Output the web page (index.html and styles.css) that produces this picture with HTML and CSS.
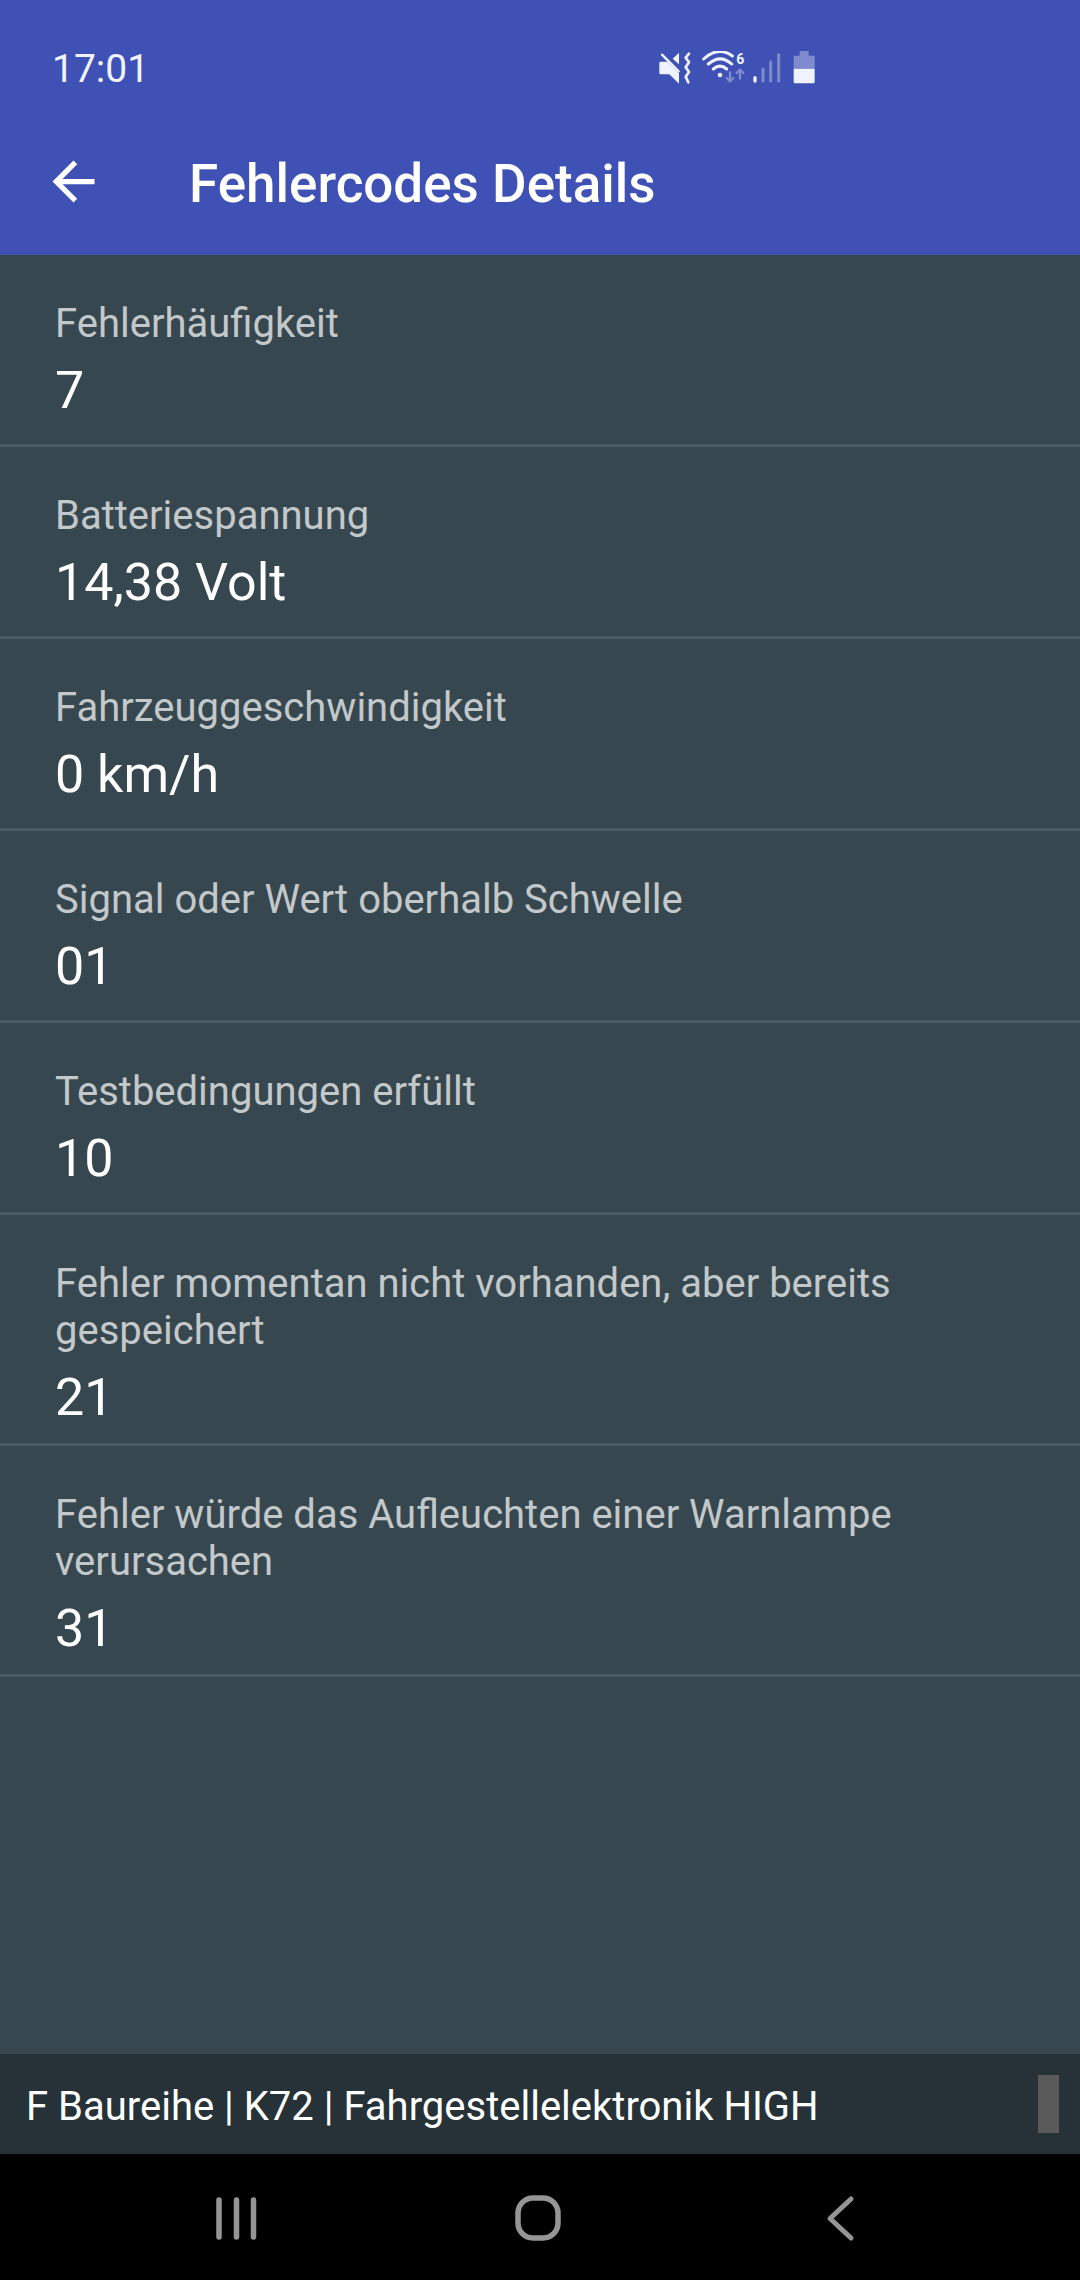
FILE: index.html
```html
<!doctype html>
<html lang="de">
    <head>
        <meta charset="utf-8">
        <meta name="viewport" content="width=device-width, initial-scale=1.0">
        <title>Fehlercodes Details</title>
        <link rel="stylesheet" href="styles.css">
    </head>
    <body>
        <div id="statusbar">
            <div class="clock">17:01</div>
            <div class="status-icons">
                <!-- muted / vibrate -->
                <svg width="34" height="34" viewBox="54 46 102 102">
                    <path class="fill" d="M62 78h20l35 35v31l-29-28H62q-4 0-4-4V82q0-4 4-4z"/>
                    <path class="fill" d="M98 69l19-18v35z"/>
                    <path class="line" stroke-width="7" d="M66 57l50 50"/>
                    <path class="line" stroke-width="8" d="M147 54l-10 12 10 14-10 15 10 14-10 14 8 17"/>
                </svg>
                <!-- wifi -->
                <svg width="44" height="34" viewBox="186 46 132 102">
                    <path class="line" stroke-width="9" d="M191 70q44-40 86-9M205 85q36-31 70 0M220 100q20-17 40 0"/>
                    <circle class="fill" cx="240" cy="118" r="7"/>
                    <text x="289" y="84">6</text>
                    <path class="line dim" stroke-width="7" d="M270 110v26M260 127l10 10 10-10M300 129v-26M290 112l10-10 10 10"/>
                </svg>
                <!-- signal -->
                <svg class="signal" width="28" height="34" viewBox="338 46 84 102">
                    <path class="line" stroke-width="10" d="M344 126v10"/>
                    <path class="line dim" stroke-width="9" d="M368 101v35M391 78v58M415 57v79"/>
                </svg>
                <!-- battery -->
                <svg width="22" height="34" viewBox="460 46 66 102">
                    <path class="fill dim" d="M480 46h27v14h14q4 0 4 4v35h-63V64q0-4 4-4h14z"/>
                    <path class="fill" d="M462 99h63v40q0 4-4 4h-55q-4 0-4-4z"/>
                </svg>
            </div>
        </div>

        <div id="header">
            <svg class="back" width="63" height="63" viewBox="0 0 24 24">
                <path d="M20 11H7.83l5.59-5.59L12 4l-8 8 8 8 1.41-1.41L7.83 13H20v-2z"/>
            </svg>
            <div id="title">Fehlercodes Details</div>
        </div>

        <div id="content">
            <div class="entry">
                <div class="label">Fehlerhäufigkeit</div>
                <div class="value">7</div>
            </div>
            <div class="entry">
                <div class="label">Batteriespannung</div>
                <div class="value">14,38 Volt</div>
            </div>
            <div class="entry">
                <div class="label">Fahrzeuggeschwindigkeit</div>
                <div class="value">0 km/h</div>
            </div>
            <div class="entry">
                <div class="label">Signal oder Wert oberhalb Schwelle</div>
                <div class="value">01</div>
            </div>
            <div class="entry">
                <div class="label">Testbedingungen erfüllt</div>
                <div class="value">10</div>
            </div>
            <div class="entry">
                <div class="label">Fehler momentan nicht vorhanden, aber bereits gespeichert</div>
                <div class="value">21</div>
            </div>
            <div class="entry">
                <div class="label">Fehler würde das Aufleuchten einer Warnlampe verursachen</div>
                <div class="value">31</div>
            </div>
        </div>

        <div id="footer">
            <div class="vehicle">F Baureihe | K72 | Fahrgestellelektronik HIGH</div>
            <div class="indicator"></div>
        </div>

        <div id="navbar">
            <svg width="60" height="60" viewBox="0 0 60 60">
                <path stroke-width="5.5" d="M13 12v37M30.500 12v37M47.500 12v37"/>
            </svg>
            <svg width="60" height="60" viewBox="0 0 60 60">
                <rect stroke-width="5.5" x="10" y="10" width="40" height="40" rx="15"/>
            </svg>
            <svg width="60" height="60" viewBox="0 0 60 60">
                <path stroke-width="5" d="M41 11L20 30.500l21 19.500"/>
            </svg>
        </div>
    </body>
</html>
```
FILE: styles.css
```css
html {
    height: 100%;
}
body {
    display: flex;
    flex-direction: column;
    height: 100%;
    margin: 0;
    font-family: Roboto, sans-serif;
    background: #37474f;
    color: #fff;
}

#statusbar, #header {
    display: flex;
    align-items: center;
    background: #3f51b5;
}
#statusbar {
    box-sizing: border-box;
    height: 98px;
    padding: 38px 265px 0 52px;
    justify-content: space-between;
}
.clock {
    padding-top: 2px;
    font-size: 39px;
    line-height: 60px;
    color: #f0f3ff;
}
.status-icons {
    display: flex;
    gap: 10px;
}
.signal {
    margin: 0 2px 0 -3px;
}
.status-icons .fill {
    fill: #f0f3ff;
}
.status-icons .line {
    fill: none;
    stroke: #f0f3ff;
    stroke-linecap: round;
    stroke-linejoin: round;
}
.status-icons .fill.dim {
    fill: #7f8bce;
}
.status-icons .line.dim {
    stroke: #7f8bce;
}
.status-icons text {
    font-size: 42px;
    font-weight: bold;
    fill: #f0f3ff;
}

#header {
    height: 157px;
    padding-left: 42px;
}
.back {
    margin-top: 10px;
    fill: #fff;
}
#title {
    margin: 14px 0 0 84px;
    font-size: 53px;
    font-weight: 500;
}

#content {
    flex: 1;
}
.entry {
    box-sizing: border-box;
    min-height: 192px;
    padding: 45px 55px 15px;
    border-bottom: solid 3px #4b5b63;
}
.label {
    font-size: 40px;
    line-height: 47px;
    letter-spacing: 0;
    color: #c3c8ca;
}
.value {
    margin-top: 13px;
    font-size: 52px;
    line-height: 61px;
}

#footer {
    display: flex;
    align-items: center;
    justify-content: space-between;
    height: 100px;
    padding: 0 21px 0 26px;
    background: #263238;
}
.vehicle {
    padding-top: 4px;
    font-size: 40px;
}
.indicator {
    width: 21px;
    height: 58px;
    background: #5a5a5a;
}

#navbar {
    box-sizing: border-box;
    display: flex;
    justify-content: space-between;
    height: 126px;
    padding: 2px 210px 0 206px;
    align-items: center;
    background: #000;
}
#navbar svg {
    fill: none;
    stroke: #959595;
    stroke-linecap: round;
    stroke-linejoin: round;
}
```
